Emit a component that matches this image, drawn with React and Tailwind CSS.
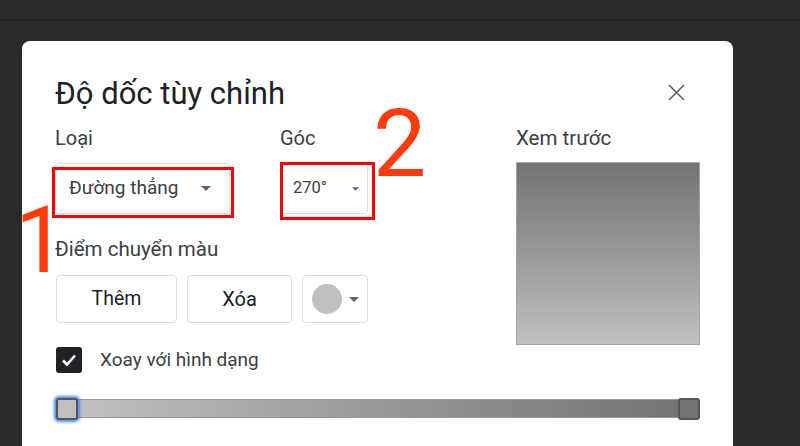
import React from 'react';

const Caret = ({ w = 10, h = 5 }) => (
  <svg width={w} height={h} viewBox="0 0 10 5">
    <polygon points="0,0 10,0 5,5" fill="#5f6368" />
  </svg>
);

export default function App() {
  return (
    <div className="relative w-[800px] h-[446px] overflow-hidden bg-[#2a2a2a] font-['Roboto',sans-serif]">
      <div className="h-[20px] bg-[#2c2c2c] border-b border-[#222]" />

      {/* Dialog */}
      <div className="ml-[22px] mt-[21px] w-[711px] h-[420px] rounded-t-[8px] bg-white pl-[33px] pr-[33px] pt-[35px]">
        <div className="flex items-start justify-between">
          <h1 className="text-[31px] leading-[36px] text-[#202124]">Độ dốc tùy chỉnh</h1>
          <button className="mt-[8px] mr-[15px]">
            <svg width="17" height="17" viewBox="0 0 17 17">
              <path d="M1 1 L16 16 M16 1 L1 16" stroke="#5f6368" strokeWidth="1.6" />
            </svg>
          </button>
        </div>

        <div className="mt-[16px] flex items-start">
          <div className="w-[461px]">
            <div className="flex">
              <div className="w-[225px]">
                <div className="text-[20px] leading-[20px] text-[#3c4043]">Loại</div>
                <div className="mt-[15px] w-[175px] h-[51px] rounded-[4px] border border-[#dadce0] flex items-center justify-between pl-[13px] pr-[18px]">
                  <span className="text-[19px] text-[#3c4043]">Đường thẳng</span>
                  <Caret />
                </div>
              </div>
              <div>
                <div className="text-[20px] leading-[20px] text-[#3c4043]">Góc</div>
                <div className="mt-[15px] w-[88px] h-[51px] rounded-[4px] border border-[#dadce0] flex items-center justify-between pl-[12px] pr-[8px]">
                  <span className="text-[16.5px] text-[#3c4043]">270°</span>
                  <Caret w={7} h={4} />
                </div>
              </div>
            </div>

            <div className="mt-[25px] text-[20.5px] leading-[20px] text-[#3c4043]">Điểm chuyển màu</div>
            <div className="mt-[16px] flex gap-[10px] pl-px">
              <button className="w-[121px] h-[48px] rounded-[4px] border border-[#dadce0] text-[19.5px] text-[#202124]">Thêm</button>
              <button className="w-[105px] h-[48px] rounded-[4px] border border-[#dadce0] text-[20px] text-[#202124]">Xóa</button>
              <button className="w-[66px] h-[48px] rounded-[4px] border border-[#dadce0] flex items-center justify-between pl-[9px] pr-[8px]">
                <span className="w-[30px] h-[30px] rounded-full bg-[#c0c0c0]" />
                <Caret w={10} h={5} />
              </button>
            </div>
          </div>

          <div>
            <div className="text-[20.5px] leading-[20px] text-[#3c4043]">Xem trước</div>
            <div className="mt-[14px] w-[184px] h-[183px] border border-[#a5a5a5] bg-gradient-to-b from-[#737373] to-[#c0c0c0]" />
          </div>
        </div>

        <div className="mt-[1px] flex items-center pl-px">
          <div className="w-[26px] h-[26px] rounded-[3px] bg-[#202124] flex items-center justify-center">
            <svg width="18" height="18" viewBox="0 0 18 18">
              <path d="M3 9.5 L7 13.5 L15 4.5" stroke="#fff" strokeWidth="2.6" fill="none" />
            </svg>
          </div>
          <span className="ml-[18px] text-[19px] text-[#3c4043]">Xoay với hình dạng</span>
        </div>

        <div className="mt-[23px] ml-px w-[644px] h-[22px] flex items-center">
          <div className="w-[22px] h-[22px] rounded-[3px] border-2 border-[#555] bg-[#c0c0c0] shadow-[0_0_3px_2px_#4a8af4] shrink-0 z-10" />
          <div className="flex-1 h-[19px] -mx-[4px] border-y border-[#999] bg-gradient-to-r from-[#c0c0c0] to-[#737373]" />
          <div className="w-[22px] h-[22px] rounded-[3px] border-2 border-[#555] bg-[#737373] shrink-0 z-10" />
        </div>
      </div>

      {/* Annotations */}
      <div className="absolute left-[52px] top-[167px] w-[182px] h-[51px] border-[3px] border-[#ff0000]" />
      <div className="absolute left-[280px] top-[162px] w-[95px] h-[58px] border-[3px] border-[#ff0000]" />
      <div className="absolute left-[15px] top-[195px] text-[92px] leading-none text-[#fb3a0e]">1</div>
      <div className="absolute left-[373px] top-[96px] text-[95px] leading-none text-[#fb3a0e]">2</div>
    </div>
  );
}
